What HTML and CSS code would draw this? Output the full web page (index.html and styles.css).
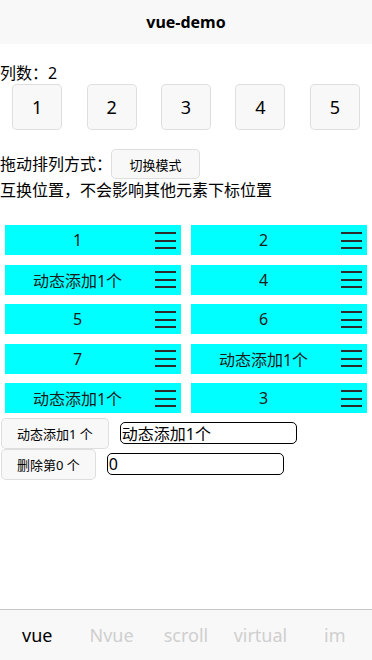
FILE: index.html
```html
<!DOCTYPE html>
<html lang="zh">
<head>
    <meta charset="UTF-8">
    <meta name="viewport" content="width=device-width, initial-scale=1.0">
    <title>vue-demo</title>
    <link rel="stylesheet" href="styles.css">
</head>
<body>
    <div class="nav-bar">vue-demo</div>

    <div class="page">
        <div class="line">列数：2</div>
        <div class="cols">
            <div class="col"><button class="btn">1</button></div>
            <div class="col"><button class="btn">2</button></div>
            <div class="col"><button class="btn">3</button></div>
            <div class="col"><button class="btn">4</button></div>
            <div class="col"><button class="btn">5</button></div>
        </div>

        <div class="mode-row">
            <span>拖动排列方式：</span>
            <button class="btn mini">切换模式</button>
        </div>
        <div class="line">互换位置，不会影响其他元素下标位置</div>

        <div class="drag-list">
            <div class="cell"><div class="item"><span class="item-text">1</span><svg class="handle" viewBox="0 0 21 17"><rect y="0" width="21" height="2"/><rect y="8" width="21" height="2"/><rect y="15" width="21" height="2"/></svg></div></div>
            <div class="cell"><div class="item"><span class="item-text">2</span><svg class="handle" viewBox="0 0 21 17"><rect y="0" width="21" height="2"/><rect y="8" width="21" height="2"/><rect y="15" width="21" height="2"/></svg></div></div>
            <div class="cell"><div class="item"><span class="item-text">动态添加1个</span><svg class="handle" viewBox="0 0 21 17"><rect y="0" width="21" height="2"/><rect y="8" width="21" height="2"/><rect y="15" width="21" height="2"/></svg></div></div>
            <div class="cell"><div class="item"><span class="item-text">4</span><svg class="handle" viewBox="0 0 21 17"><rect y="0" width="21" height="2"/><rect y="8" width="21" height="2"/><rect y="15" width="21" height="2"/></svg></div></div>
            <div class="cell"><div class="item"><span class="item-text">5</span><svg class="handle" viewBox="0 0 21 17"><rect y="0" width="21" height="2"/><rect y="8" width="21" height="2"/><rect y="15" width="21" height="2"/></svg></div></div>
            <div class="cell"><div class="item"><span class="item-text">6</span><svg class="handle" viewBox="0 0 21 17"><rect y="0" width="21" height="2"/><rect y="8" width="21" height="2"/><rect y="15" width="21" height="2"/></svg></div></div>
            <div class="cell"><div class="item"><span class="item-text">7</span><svg class="handle" viewBox="0 0 21 17"><rect y="0" width="21" height="2"/><rect y="8" width="21" height="2"/><rect y="15" width="21" height="2"/></svg></div></div>
            <div class="cell"><div class="item"><span class="item-text">动态添加1个</span><svg class="handle" viewBox="0 0 21 17"><rect y="0" width="21" height="2"/><rect y="8" width="21" height="2"/><rect y="15" width="21" height="2"/></svg></div></div>
            <div class="cell"><div class="item"><span class="item-text">动态添加1个</span><svg class="handle" viewBox="0 0 21 17"><rect y="0" width="21" height="2"/><rect y="8" width="21" height="2"/><rect y="15" width="21" height="2"/></svg></div></div>
            <div class="cell"><div class="item"><span class="item-text">3</span><svg class="handle" viewBox="0 0 21 17"><rect y="0" width="21" height="2"/><rect y="8" width="21" height="2"/><rect y="15" width="21" height="2"/></svg></div></div>
        </div>

        <div class="ctrl-row">
            <button class="btn mini ctrl-btn">动态添加1 个</button>
            <input class="ctrl-input" type="text" value="动态添加1个">
        </div>
        <div class="ctrl-row">
            <button class="btn mini ctrl-btn">删除第0 个</button>
            <input class="ctrl-input" type="text" value="0">
        </div>
    </div>

    <div class="tab-bar">
        <div class="tab active">vue</div>
        <div class="tab">Nvue</div>
        <div class="tab">scroll</div>
        <div class="tab">virtual</div>
        <div class="tab">im</div>
    </div>
</body>
</html>
```

FILE: styles.css
```css
body {
    margin: 0;
    font-family: "Noto Sans", "Noto Sans CJK SC", sans-serif;
    font-size: 16px;
    color: #000;
    background-color: #fff;
    height: 660px;
    overflow: hidden;
}
.nav-bar {
    height: 44px;
    line-height: 44px;
    text-align: center;
    font-size: 16px;
    font-weight: 700;
    background-color: #f8f8f8;
}
.page {
    padding-top: 18px;
}
.line {
    line-height: 22px;
    white-space: nowrap;
}
.cols {
    display: flex;
}
.col {
    flex: 1;
    display: flex;
    justify-content: center;
}
.btn {
    font-family: inherit;
    font-size: 18px;
    color: #000;
    height: 46px;
    width: 50px;
    padding: 0;
    background-color: #f8f8f8;
    border: 1px solid rgba(0, 0, 0, 0.1);
    border-radius: 5px;
}
.btn.mini {
    font-size: 13px;
    height: 30px;
    width: auto;
    padding: 0 1.34em;
}
.mode-row {
    display: flex;
    align-items: center;
    margin-top: 19px;
    line-height: 22px;
}
.mode-row .btn {
    margin-left: -1px;
}
.drag-list {
    display: grid;
    grid-template-columns: 1fr 1fr;
    grid-auto-rows: 39.5px;
    margin-top: 19px;
}
.cell {
    padding: 5px 5px 0;
}
.item {
    display: flex;
    align-items: center;
    height: 30px;
    background-color: #00ffff;
}
.item-text {
    flex: 1;
    text-align: center;
    white-space: nowrap;
    color: #1a1a1a;
}
.handle {
    width: 21px;
    height: 17px;
    margin: 0 5px 0 5px;
    fill: #2b2b2b;
}
.ctrl-row {
    display: flex;
    align-items: center;
}
.btn.mini.ctrl-btn {
    font-size: 13px;
    height: 31px;
    margin-left: 1px;
    padding: 0 15px;
}
.ctrl-input {
    width: 177px;
    height: 22px;
    box-sizing: border-box;
    margin-left: 11px;
    padding: 0 1px;
    font-family: inherit;
    font-size: 16px;
    border: 1px solid #000;
    border-radius: 5px;
    outline: none;
}
.tab-bar {
    position: fixed;
    left: 0;
    right: 0;
    bottom: 0;
    height: 50px;
    display: flex;
    align-items: center;
    background-color: #f8f8f8;
    border-top: 1px solid rgba(0, 0, 0, 0.2);
}
.tab {
    flex: 1;
    text-align: center;
    font-size: 18px;
    color: #cfcfcf;
}
.tab.active {
    color: #000;
}
```
